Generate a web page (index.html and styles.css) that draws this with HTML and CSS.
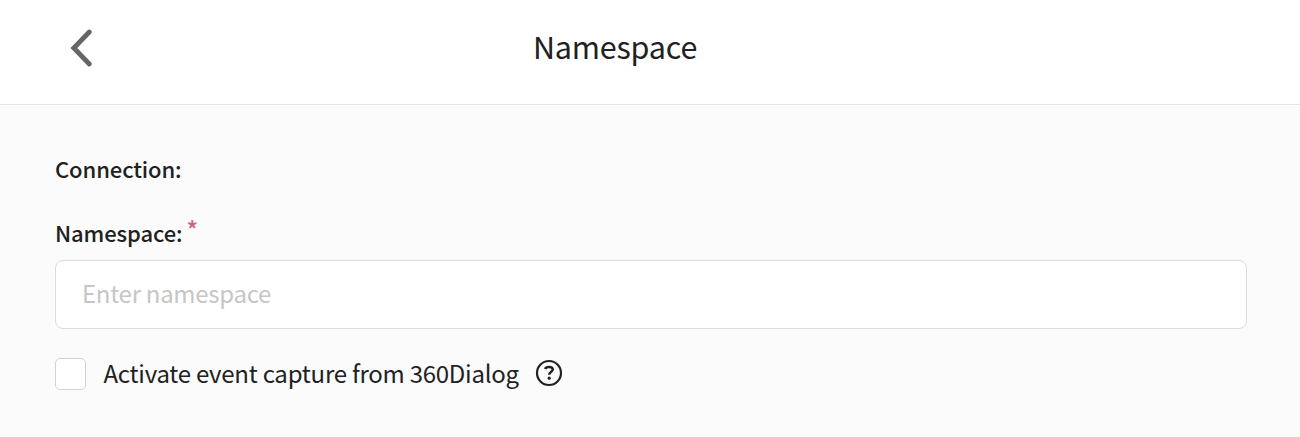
FILE: index.html
```html
<!DOCTYPE html>
<html lang="en">
<head>
    <meta charset="UTF-8">
    <meta name="viewport" content="width=device-width, initial-scale=1.0">
    <title>Namespace</title>
    <link rel="stylesheet" href="styles.css">
</head>
<body>
    <header class="header">
        <button class="back-btn" type="button" aria-label="Back">
            <svg width="24" height="38" viewBox="0 0 24 38" fill="none">
                <path d="M19.3 3L3.8 19L19.3 35" stroke="#666" stroke-width="4.8" stroke-linecap="round"/>
            </svg>
        </button>
        <h1 class="title">Namespace</h1>
    </header>

    <main class="content">
        <div class="label">Connection:</div>
        <label class="label label-field" for="namespace">Namespace:<span class="required">*</span></label>
        <input class="text-input" type="text" id="namespace" placeholder="Enter namespace">
        <div class="check-row">
            <input class="checkbox" type="checkbox" id="capture">
            <label class="check-label" for="capture">Activate event capture from 360Dialog</label>
            <svg class="help" width="28" height="28" viewBox="0 0 28 28" fill="none">
                <circle cx="14" cy="14" r="12" stroke="#212121" stroke-width="2.2"/>
                <path d="M10.1 10C10.6 8.6 12 8 13.9 8C16.3 8 17.8 9 17.8 10.6C17.8 12.7 14.2 12.8 14.2 15.8" stroke="#212121" stroke-width="2.5"/>
                <circle cx="14.2" cy="19.2" r="1.6" fill="#212121"/>
            </svg>
        </div>
    </main>
</body>
</html>
```
FILE: styles.css
```css
* {
    box-sizing: border-box;
}
body {
    margin: 0;
    min-height: 100vh;
    background: #fbfbfb;
    color: #212121;
    font-family: "Noto Sans CJK SC", "Noto Sans", sans-serif;
}
.header {
    display: grid;
    grid-template-columns: 70px 1090px;
    align-items: center;
    height: 105px;
    padding-bottom: 8px;
    background: #fff;
    border-bottom: 1px solid #e4e4e4;
}
.back-btn {
    justify-self: end;
    width: 24px;
    height: 38px;
    margin-right: -24px;
    padding: 0;
    border: none;
    background: none;
    cursor: pointer;
}
.back-btn svg {
    display: block;
}
.title {
    margin: 0 0 4px;
    font-size: 30.5px;
    font-weight: 400;
    line-height: 40px;
    letter-spacing: -0.2px;
    text-align: center;
}
.content {
    padding: 48px 53px 0 55px;
}
.label {
    display: flex;
    font-size: 22px;
    font-weight: 500;
    line-height: 30px;
    letter-spacing: -0.1px;
}
.label-field {
    height: 30px;
    margin-top: 34px;
}
.required {
    margin: -3px 0 0 4px;
    color: #cf6679;
    font-size: 24px;
}
.text-input {
    display: block;
    width: 100%;
    height: 69px;
    margin-top: 13px;
    padding: 0 26px 4px;
    border: 1px solid #dcdcdc;
    border-radius: 8px;
    background: #fff;
    font-family: inherit;
    font-size: 24px;
    letter-spacing: -0.28px;
}
.text-input::placeholder {
    color: #c6c6c6;
}
.check-row {
    display: flex;
    align-items: center;
    margin-top: 29px;
}
.checkbox {
    appearance: none;
    width: 31px;
    height: 32px;
    margin: 0 17.5px 0 0;
    border: 1px solid #d2d2d2;
    border-radius: 5px;
    background: #fff;
}
.check-label {
    margin-top: -2px;
    font-size: 24px;
    line-height: 32px;
    letter-spacing: -0.25px;
}
.help {
    margin: -2px 0 0 16.5px;
}
```
